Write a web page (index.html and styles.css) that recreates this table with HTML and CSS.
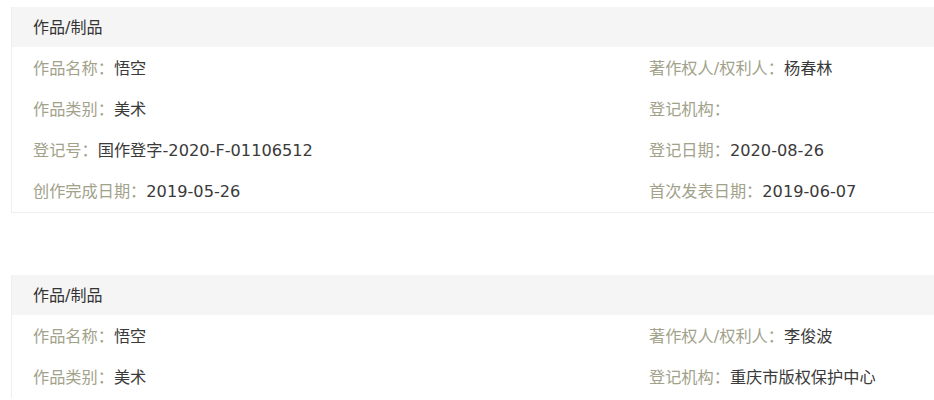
FILE: index.html
```html
<!DOCTYPE html>
<html lang="zh-CN">
<head>
    <meta charset="UTF-8">
    <meta name="viewport" content="width=device-width, initial-scale=1.0">
    <title>作品登记信息</title>
    <link rel="stylesheet" href="styles.css">
</head>
<body>

<div class="page">
    <div class="card">
        <div class="card-head">作品/制品</div>
        <div class="card-body">
            <p><span class="label">作品名称：</span>悟空</p>
            <p><span class="label">著作权人/权利人：</span>杨春林</p>
            <p><span class="label">作品类别：</span>美术</p>
            <p><span class="label">登记机构：</span></p>
            <p><span class="label">登记号：</span>国作登字-2020-F-01106512</p>
            <p><span class="label">登记日期：</span>2020-08-26</p>
            <p><span class="label">创作完成日期：</span>2019-05-26</p>
            <p><span class="label">首次发表日期：</span>2019-06-07</p>
        </div>
    </div>

    <!-- la segunda ficha sigue por debajo del borde de la ventana -->
    <div class="card card-open">
        <div class="card-head">作品/制品</div>
        <div class="card-body">
            <p><span class="label">作品名称：</span>悟空</p>
            <p><span class="label">著作权人/权利人：</span>李俊波</p>
            <p><span class="label">作品类别：</span>美术</p>
            <p><span class="label">登记机构：</span>重庆市版权保护中心</p>
        </div>
    </div>
</div>

</body>
</html>
```

FILE: styles.css
```css
html, body {
    overflow: hidden;
}
body {
    margin: 0;
    font-family: "DejaVu Sans", "Noto Sans CJK SC", sans-serif;
    color: #333;
    background-color: #fff;
}
.page {
    padding: 7px 0 0 11px;
    width: 1300px;
}
.card {
    border: 1px solid #eee;
    border-top: none;
    margin-bottom: 62px;
}
.card-open {
    border-bottom: none;
}
.card-head {
    background-color: #f5f5f5;
    height: 38px;
    line-height: 38px;
    padding: 2px 0 0 21px;
    font-size: 16px;
    color: #333;
}
.card-body {
    display: grid;
    grid-template-columns: 616px 1fr;
    padding: 0 0 1px 21px;
}
.card-body p {
    margin: 0;
    height: 38px;
    line-height: 38px;
    padding-top: 3px;
    font-size: 16.2px;
    color: #3a3a3a;
}
.label {
    color: #a2a28b;
}
```
